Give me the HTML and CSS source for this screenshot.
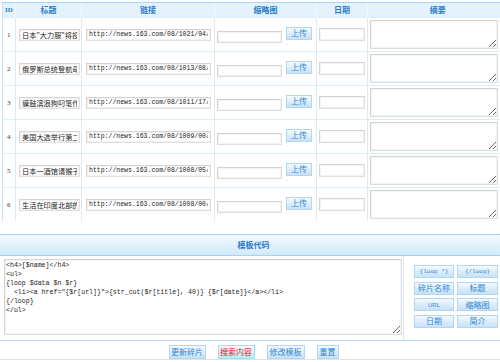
FILE: index.html
```html
<!DOCTYPE html>
<html>
<head>
<meta charset="utf-8">
<link rel="stylesheet" href="styles.css">
</head>
<body>
<div class="page">
  <table class="grid">
    <colgroup>
      <col class="c-id"><col class="c-title"><col class="c-url"><col class="c-thumb"><col class="c-date"><col class="c-desc">
    </colgroup>
    <thead>
      <tr><th class="h-id">ID</th><th>标题</th><th>链接</th><th>缩略图</th><th>日期</th><th>摘要</th></tr>
    </thead>
    <tbody>
      <tr>
        <td class="id">1</td>
        <td class="p-title"><input class="in-title" value='日本"大力服"将投入市场'></td>
        <td class="p-url"><input class="in-url" value="http://news.163.com/08/1021/04/4O2JHTNS0001121M.html"></td>
        <td class="p-thumb"><div class="thumb"><input class="in-thumb"><button class="btn up">上传</button></div></td>
        <td class="p-date"><input class="in-date"></td>
        <td class="p-desc"><textarea class="in-desc"></textarea></td>
      </tr>
      <tr>
        <td class="id">2</td>
        <td class="p-title"><input class="in-title" value="俄罗斯总统登航母视察"></td>
        <td class="p-url"><input class="in-url" value="http://news.163.com/08/1013/08/4NDU6K2E0001121M.html"></td>
        <td class="p-thumb"><div class="thumb"><input class="in-thumb"><button class="btn up">上传</button></div></td>
        <td class="p-date"><input class="in-date"></td>
        <td class="p-desc"><textarea class="in-desc"></textarea></td>
      </tr>
      <tr>
        <td class="id">3</td>
        <td class="p-title"><input class="in-title" value="貘鼓滨浪狗叼笔作画"></td>
        <td class="p-url"><input class="in-url" value="http://news.163.com/08/1011/17/4N9N3L7S0001121M.html"></td>
        <td class="p-thumb"><div class="thumb"><input class="in-thumb"><button class="btn up">上传</button></div></td>
        <td class="p-date"><input class="in-date"></td>
        <td class="p-desc"><textarea class="in-desc"></textarea></td>
      </tr>
      <tr>
        <td class="id">4</td>
        <td class="p-title"><input class="in-title" value="美国大选举行第二场辩论"></td>
        <td class="p-url"><input class="in-url" value="http://news.163.com/08/1009/00/4N2P8E3V0001121M.html"></td>
        <td class="p-thumb"><div class="thumb"><input class="in-thumb"><button class="btn up">上传</button></div></td>
        <td class="p-date"><input class="in-date"></td>
        <td class="p-desc"><textarea class="in-desc"></textarea></td>
      </tr>
      <tr>
        <td class="id">5</td>
        <td class="p-title"><input class="in-title" value="日本一酒馆请猴子当服务员"></td>
        <td class="p-url"><input class="in-url" value="http://news.163.com/08/1008/05/4N0QK1F90001121M.html"></td>
        <td class="p-thumb"><div class="thumb"><input class="in-thumb"><button class="btn up">上传</button></div></td>
        <td class="p-date"><input class="in-date"></td>
        <td class="p-desc"><textarea class="in-desc"></textarea></td>
      </tr>
      <tr>
        <td class="id">6</td>
        <td class="p-title"><input class="in-title" value="生活在印度北部的老虎"></td>
        <td class="p-url"><input class="in-url" value="http://news.163.com/08/1008/00/4N06R2MS0001121M.html"></td>
        <td class="p-thumb"><div class="thumb"><input class="in-thumb"><button class="btn up">上传</button></div></td>
        <td class="p-date"><input class="in-date"></td>
        <td class="p-desc"><textarea class="in-desc"></textarea></td>
      </tr>
    </tbody>
  </table>

  <div class="module">
    <div class="module-bar">模板代码</div>
    <div class="module-body">
      <div class="code-wrap">
<textarea class="code">&lt;h4&gt;[$name]&lt;/h4&gt;
&lt;ul&gt;
{loop $data $n $r}
  &lt;li&gt;&lt;a href="{$r[url]}"&gt;{str_cut($r[title], 40)} {$r[date]}&lt;/a&gt;&lt;/li&gt;
{/loop}
&lt;/ul&gt;</textarea>
      </div>
      <div class="tags">
        <button class="btn tag mono">{loop *}</button>
        <button class="btn tag mono">{/loop}</button>
        <button class="btn tag">碎片名称</button>
        <button class="btn tag">标题</button>
        <button class="btn tag small">URL</button>
        <button class="btn tag">缩略图</button>
        <button class="btn tag">日期</button>
        <button class="btn tag">简介</button>
      </div>
    </div>
    <div class="actions">
      <button class="btn act w37">更新碎片</button>
      <button class="btn act w37 red">搜索内容</button>
      <button class="btn act w38">修改模板</button>
      <button class="btn act w22">重置</button>
    </div>
  </div>
</div>
</body>
</html>
```

FILE: styles.css
```css
html, body {
  margin: 0;
  padding: 0;
  overflow: hidden;
  background: #ffffff;
}

.page {
  width: 507px;
  padding-top: 2px;
  font-family: "Noto Sans CJK SC", "Liberation Sans", sans-serif;
}

/* ---------- grid table ---------- */
.grid {
  margin-left: 2px;
  width: 505px;
  border-collapse: collapse;
  table-layout: fixed;
}

.c-id { width: 13px; }
.c-title { width: 66px; }
.c-url { width: 133px; }
.c-thumb { width: 102px; }
.c-date { width: 51px; }
.c-desc { width: 140px; }

.grid th {
  height: 14px;
  padding: 0;
  background: #e4f2fd;
  border-top: 1px solid #a8d4f6;
  border-left: 1px solid #f2f9ff;
  color: #2a7bcb;
  font-size: 8px;
  font-weight: bold;
  line-height: 14px;
  text-align: center;
}

.grid th.h-id {
  font-family: "Liberation Serif", serif;
  font-size: 7px;
  border-left: 1px solid #c7e2f8;
}

.grid td {
  height: 33px;
  padding: 0;
  border-left: 1px solid #d8ebfa;
  border-top: 1px solid #ddedf9;
  vertical-align: middle;
}

.grid td.id {
  padding-left: 4px;
  font-family: "Liberation Serif", serif;
  font-size: 7px;
  color: #333;
  border-left: 1px solid #c7e2f8;
}

.p-title { padding-left: 3px !important; }
.p-url { padding-left: 4px !important; }
.p-thumb { padding-left: 2px !important; }
.p-date { padding-left: 2px !important; }
.p-desc { padding-left: 2px !important; }

input, textarea {
  box-sizing: border-box;
  margin: 0;
  border: 1px solid #dedede;
  border-top-color: #d4d4d4;
  border-left-color: #d4d4d4;
  box-shadow: inset 0 0 0 1px #f3f3f3;
  background: #fff;
  color: #222;
  outline: none;
  display: block;
}

input {
  padding: 0 2px;
}

.in-title {
  width: 61px;
  height: 12px;
  font-size: 7.2px;
  font-family: "Noto Sans CJK SC", sans-serif;
}

.in-url {
  width: 125px;
  height: 12px;
  font-size: 6.5px;
  font-family: "Liberation Mono", monospace;
}

.thumb {
  display: flex;
  align-items: flex-start;
  gap: 4px;
}

.in-thumb {
  width: 65px;
  height: 12px;
  margin-top: 4px;
}

.in-date {
  width: 46px;
  height: 13px;
}

.in-desc {
  width: 128px;
  height: 29px;
  padding: 0;
}

/* ---------- buttons ---------- */
.btn {
  box-sizing: border-box;
  margin: 0;
  padding: 0;
  border: 1px solid #b3d7f2;
  background: linear-gradient(#f5faff, #d9ecfa 55%, #c6e2f7);
  color: #2f86d6;
  font-family: "Noto Sans CJK SC", sans-serif;
  font-size: 8px;
  line-height: 1;
  text-align: center;
  cursor: pointer;
}

.up {
  width: 26px;
  height: 13px;
}

/* ---------- module ---------- */
.module {
  margin-top: 13px;
}

.module-bar {
  height: 20px;
  border-top: 1px solid #a6d3f5;
  border-bottom: 1px solid #a6d3f5;
  background: linear-gradient(#f3f9fe, #d2eafb);
  color: #2a7bcb;
  font-size: 8px;
  font-weight: bold;
  line-height: 20px;
  text-align: center;
}

.module-body {
  display: flex;
  height: 84px;
  border-bottom: 1px solid #b3d9f5;
}

.code-wrap {
  width: 399px;
  padding: 3px 0 0 4px;
}

.code {
  width: 398px;
  height: 76px;
  padding: 1px 1px;
  font-family: "Liberation Mono", monospace;
  font-size: 6.6px;
  line-height: 9px;
  color: #222;
  white-space: pre;
  overflow: hidden;
}

.tags {
  border-left: 1px solid #cfe6f8;
  padding: 9px 0 0 10px;
  display: grid;
  grid-template-columns: 40px 41px;
  grid-auto-rows: 13px;
  column-gap: 3px;
  row-gap: 3.6px;
  align-content: start;
}

.tag {
  height: 13px;
}

.tag.mono {
  font-family: "Liberation Mono", monospace;
  font-size: 6px;
}

.tag.small {
  font-family: "Liberation Sans", sans-serif;
  font-size: 6px;
}

.actions {
  height: 19px;
  display: flex;
  justify-content: center;
  align-items: flex-start;
  gap: 12px;
  padding-top: 4px;
  box-sizing: border-box;
  border-bottom: 1px solid #e2e2e2;
}

.act {
  height: 14px;
}

.w37 { width: 37px; }
.w38 { width: 38px; }
.w22 { width: 22px; }

.red {
  color: #e41b1b;
}
```
